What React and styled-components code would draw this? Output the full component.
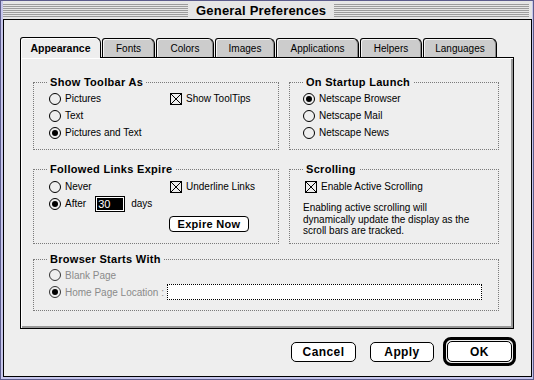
import React from "react";
import styled, { createGlobalStyle } from "styled-components";

const GlobalStyle = createGlobalStyle`
  html, body { margin: 0; padding: 0; background: #fff; }
  body {
    font-family: "Liberation Sans", Arial, sans-serif;
    font-size: 10px;
    color: #000;
  }
  * { box-sizing: border-box; }
`;

const tabs = [
  { label: "Appearance", width: 81, active: true },
  { label: "Fonts", width: 53 },
  { label: "Colors", width: 58 },
  { label: "Images", width: 60 },
  { label: "Applications", width: 83 },
  { label: "Helpers", width: 62 },
  { label: "Languages", width: 74 },
];

export default function App() {
  return (
    <>
      <GlobalStyle />
      <Window>
        {/* title bar */}
        <TitleBar>
          <Stripes />
          <Title>General Preferences</Title>
          <Stripes />
        </TitleBar>

        <Content>
          {/* tabs */}
          <TabRow>
            {tabs.map((t) => (
              <Tab key={t.label} $w={t.width} $active={t.active}>
                {t.label}
              </Tab>
            ))}
          </TabRow>

          <Panel>
            <Row>
              <Group $w={246}>
                <Legend>Show Toolbar As</Legend>
                <GroupBody $pad="1px 8px 8px 15px">
                  <TwoCols>
                    <div>
                      <Item>
                        <Radio />
                        Pictures
                      </Item>
                      <Item>
                        <Radio />
                        Text
                      </Item>
                      <Item>
                        <Radio $checked />
                        Pictures and Text
                      </Item>
                    </div>
                    <div>
                      <Item>
                        <Check />
                        Show ToolTips
                      </Item>
                    </div>
                  </TwoCols>
                </GroupBody>
              </Group>

              <Group $w={210}>
                <Legend>On Startup Launch</Legend>
                <GroupBody $pad="1px 8px 8px 13px">
                  <Item>
                    <Radio $checked />
                    Netscape Browser
                  </Item>
                  <Item>
                    <Radio />
                    Netscape Mail
                  </Item>
                  <Item>
                    <Radio />
                    Netscape News
                  </Item>
                </GroupBody>
              </Group>
            </Row>

            <Row $mt={13}>
              <Group $w={246}>
                <Legend>Followed Links Expire</Legend>
                <GroupBody $pad="2px 8px 9px 15px">
                  <ExpireGrid>
                    <Item>
                      <Radio />
                      Never
                    </Item>
                    <Item>
                      <Check />
                      Underline Links
                    </Item>
                    <Item>
                      <Radio $checked />
                      After
                      <DaysField>30</DaysField>
                      <Days>days</Days>
                    </Item>
                    <span />
                    <span />
                    <SmallButton>Expire Now</SmallButton>
                  </ExpireGrid>
                </GroupBody>
              </Group>

              <Group $w={210}>
                <Legend>Scrolling</Legend>
                <GroupBody $pad="2px 8px 6px 13px">
                  <Item $indent={2}>
                    <Check />
                    Enable Active Scrolling
                  </Item>
                  <Note>
                    Enabling active scrolling will
                    <br />
                    dynamically update the display as the
                    <br />
                    scroll bars are tracked.
                  </Note>
                </GroupBody>
              </Group>
            </Row>

            <Row $mt={9}>
              <Group $w={466}>
                <Legend>Browser Starts With</Legend>
                <GroupBody $pad="1px 16px 9px 15px">
                  <Item $disabled>
                    <Radio $disabled />
                    Blank Page
                  </Item>
                  <Item $disabled>
                    <Radio $checked $disabled />
                    Home Page Location :
                    <UrlField />
                  </Item>
                </GroupBody>
              </Group>
            </Row>
          </Panel>

          {/* dialog buttons */}
          <ButtonBar>
            <Button $w={65}>Cancel</Button>
            <Button $w={64} $ml={14}>
              Apply
            </Button>
            <DefaultRing>
              <Button $w={65} $fill>
                OK
              </Button>
            </DefaultRing>
          </ButtonBar>
        </Content>
      </Window>
    </>
  );
}

function Radio({ $checked, $disabled }) {
  return (
    <RadioCircle $disabled={$disabled}>{$checked && <RadioDot />}</RadioCircle>
  );
}

function Check() {
  return (
    <CheckBox>
      <svg width="10" height="10" viewBox="0 0 10 10">
        <path d="M0 0L10 10M10 0L0 10" stroke="#000" strokeWidth="1" />
      </svg>
    </CheckBox>
  );
}

const Window = styled("div")`
  width: 534px;
  height: 380px;
  display: flex;
  flex-direction: column;
  background: #c6c6ec;
  border: 1px solid #5c5c8c;
  padding: 0 1px 2px 2px;
`;

const TitleBar = styled("div")`
  height: 18px;
  display: grid;
  grid-template-columns: 185px auto 1fr;
  align-items: center;
  background: #e6e6e6;
  padding-right: 3px;
`;

const Stripes = styled("div")`
  height: 13px;
  background: repeating-linear-gradient(
    to bottom,
    #9c9c9c 0 1px,
    transparent 1px 2px
  );
`;

const Title = styled("div")`
  padding: 0 8px;
  font-weight: bold;
  font-size: 13px;
  letter-spacing: 0.2px;
`;

const Content = styled("div")`
  flex: 1;
  background: #eeeeee;
  border: 1px solid #000;
  padding: 17px 17px 0 16px;
  display: flex;
  flex-direction: column;
`;

const TabRow = styled("div")`
  display: flex;
  align-items: flex-end;
  gap: 1px;
  height: 20px;
`;

const Tab = styled("div")`
  width: ${({ $w }) => $w}px;
  height: ${({ $active }) => ($active ? 21 : 19)}px;
  margin-bottom: ${({ $active }) => ($active ? -1 : 0)}px;
  position: relative;
  z-index: ${({ $active }) => ($active ? 1 : 0)};
  border: 1px solid #000;
  border-bottom: none;
  border-radius: 3px 6px 0 0;
  background: ${({ $active }) => ($active ? "#eeeeee" : "#cccccc")};
  box-shadow: ${({ $active }) =>
    $active
      ? "inset 1px 1px 0 #fff"
      : "inset 1px 1px 0 #f4f4f4, inset -1px 0 0 #888"};
  display: flex;
  align-items: center;
  justify-content: center;
  font-size: ${({ $active }) => ($active ? "10.5px" : "10px")};
  font-weight: ${({ $active }) => ($active ? "bold" : "normal")};
  padding-top: ${({ $active }) => ($active ? 0 : 1)}px;
`;

const Panel = styled("div")`
  height: 272px;
  border: 1px solid #000;
  background: #eeeeee;
  box-shadow: inset 1px 1px 0 #fff, inset -2px -2px 0 #999;
  padding: 18px 0 0 12px;
  display: flex;
  flex-direction: column;
`;

const Row = styled("div")`
  display: flex;
  gap: 10px;
  margin-top: ${({ $mt }) => $mt || 0}px;
`;

const Group = styled("fieldset")`
  width: ${({ $w }) => $w}px;
  margin: 0;
  padding: 0;
  min-width: 0;
  border: 1px dotted #7a7a7a;
`;

const Legend = styled("legend")`
  margin-left: 13px;
  padding: 0 3px;
  font-weight: bold;
  font-size: 11px;
  line-height: 13px;
  letter-spacing: 0.3px;
`;

const GroupBody = styled("div")`
  padding: ${({ $pad }) => $pad};
`;

const TwoCols = styled("div")`
  display: grid;
  grid-template-columns: 121px 1fr;
`;

const ExpireGrid = styled("div")`
  display: grid;
  grid-template-columns: 121px 1fr;
  grid-template-rows: 17px 17px auto;
`;

const Item = styled("div")`
  display: flex;
  align-items: center;
  height: 17px;
  margin-left: ${({ $indent }) => $indent || 0}px;
  color: ${({ $disabled }) => ($disabled ? "#8a8a8a" : "#000")};
  white-space: nowrap;
`;

const RadioCircle = styled("span")`
  width: 12px;
  height: 12px;
  border-radius: 50%;
  border: 1px solid ${({ $disabled }) => ($disabled ? "#333" : "#000")};
  margin-right: 4px;
  display: flex;
  align-items: center;
  justify-content: center;
  flex: none;
`;

const RadioDot = styled("span")`
  width: 6px;
  height: 6px;
  border-radius: 50%;
  background: #000;
`;

const CheckBox = styled("span")`
  width: 12px;
  height: 12px;
  border: 1px solid #000;
  margin-right: 4px;
  display: flex;
  flex: none;
`;

const DaysField = styled("span")`
  width: 30px;
  height: 16px;
  margin-left: 9px;
  border: 1px solid #000;
  box-shadow: inset 0 0 0 1px #fff;
  background: #000;
  color: #fff;
  font-size: 11px;
  line-height: 14px;
  padding-left: 2px;
`;

const Days = styled("span")`
  margin-left: 6px;
`;

const SmallButton = styled("button")`
  width: 80px;
  height: 16px;
  margin: 4px 0 0 -1px;
  padding: 0;
  border: 1px solid #000;
  border-radius: 4px;
  background: #fff;
  font-family: "Liberation Sans", Arial, sans-serif;
  font-weight: bold;
  font-size: 11px;
  letter-spacing: 0.3px;
  color: #000;
`;

const Note = styled("p")`
  margin: 7px 0 0;
  line-height: 11.5px;
  white-space: nowrap;
`;

const UrlField = styled("span")`
  width: 315px;
  height: 16px;
  margin-left: auto;
  background: #fff;
  border: 1px dotted #000;
`;

const ButtonBar = styled("div")`
  display: flex;
  justify-content: flex-end;
  align-items: center;
  margin: 8px -2px 0 0;
`;

const Button = styled("button")`
  width: ${({ $w }) => $w}px;
  height: ${({ $fill }) => ($fill ? "100%" : "20px")};
  margin-left: ${({ $ml }) => $ml || 0}px;
  padding: 0;
  border: 1px solid #000;
  border-radius: 5px;
  background: #fff;
  font-family: "Liberation Sans", Arial, sans-serif;
  font-weight: bold;
  font-size: 12px;
  letter-spacing: 0.4px;
  color: #000;
`;

const DefaultRing = styled("div")`
  width: 73px;
  height: 29px;
  margin-left: 9px;
  border: 3px solid #000;
  border-radius: 8px;
  padding: 1px;
  display: flex;
`;
